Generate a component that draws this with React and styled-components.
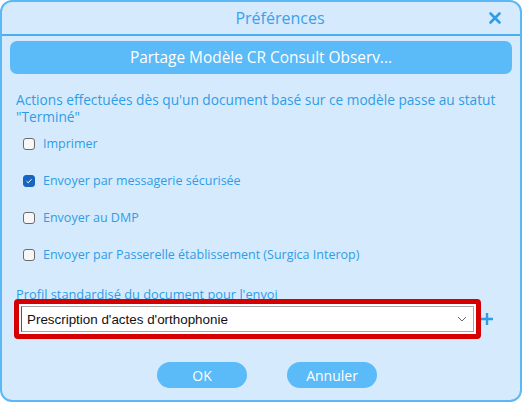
import React, { useState } from "react";
import styled, { createGlobalStyle } from "styled-components";

const GlobalStyle = createGlobalStyle`
    html, body {
        margin: 0;
        padding: 0;
        background: #ffffff;
    }
    body {
        font-family: "Open Sans", "Noto Sans", sans-serif;
    }
`;

const Dialog = styled.div`
    box-sizing: border-box;
    width: 522px;
    height: 402px;
    background-color: #d6eafd;
    border: 2px solid #5cb8f4;
    border-radius: 12px;
    display: flex;
    flex-direction: column;
    overflow: hidden;
`;

const TitleBar = styled.div`
    height: 32px;
    border-bottom: 2px solid #4aaef0;
    display: flex;
    align-items: center;
    justify-content: center;
    padding-left: 38px;
    position: relative;
`;

const Title = styled.div`
    color: #3aa2ea;
    font-size: 16px;
`;

const CloseButton = styled.button`
    position: absolute;
    right: 18px;
    top: 9px;
    border: 0;
    background: none;
    padding: 0;
    width: 14px;
    height: 14px;
    cursor: pointer;
    display: flex;
`;

const Body = styled.div`
    flex: 1;
    display: flex;
    flex-direction: column;
    padding: 5px 8px 0 8px;
`;

const ModelBar = styled.div`
    height: 33px;
    border-radius: 7px;
    background-color: #5bbaf8;
    color: #ffffff;
    font-size: 15.4px;
    display: flex;
    align-items: center;
    justify-content: center;
`;

const Intro = styled.p`
    margin: 17px 0 0 6px;
    color: #2e9de6;
    font-size: 13.7px;
    line-height: 17px;
    white-space: nowrap;
`;

const OptionList = styled.div`
    display: flex;
    flex-direction: column;
    padding-left: 13px;
`;

const Option = styled.label`
    height: 37px;
    display: flex;
    align-items: center;
    gap: 8px;
    color: #2e9de6;
    font-size: 12.5px;
    cursor: pointer;
`;

const Box = styled.span`
    box-sizing: border-box;
    width: 12px;
    height: 12px;
    border-radius: 3px;
    border: 1px solid ${(p) => (p.checked ? "#1665c0" : "#6b6b6b")};
    background-color: ${(p) => (p.checked ? "#1665c0" : "#f7f7f7")};
    display: flex;
    align-items: center;
    justify-content: center;
`;

const FieldLabel = styled.div`
    margin: 15px 0 0 6px;
    color: #2e9de6;
    font-size: 12.8px;
    line-height: 12px;
`;

const FieldRow = styled.div`
    display: flex;
    align-items: center;
    margin: -1px 0 0 4px;
`;

const Highlight = styled.div`
    box-sizing: border-box;
    width: 467px;
    height: 40px;
    border: 5px solid #d70000;
    border-radius: 4px;
    padding: 2px;
    background-color: #ffffff;
`;

const Select = styled.div`
    box-sizing: border-box;
    height: 26px;
    border: 1px solid #a7a7a7;
    border-left-color: #555555;
    background-color: #ffffff;
    display: flex;
    align-items: center;
    justify-content: space-between;
    padding: 0 6px 0 5px;
    color: #111111;
    font-size: 13.4px;
    font-family: "Liberation Sans", Arial, sans-serif;
`;

const Actions = styled.div`
    display: flex;
    justify-content: center;
    gap: 40px;
    margin-top: 23px;
    padding-left: 12px;
`;

const Button = styled.button`
    width: 90px;
    height: 26px;
    border: 0;
    border-radius: 13px;
    background-color: #5bbaf8;
    color: #ffffff;
    font-family: "Open Sans", sans-serif;
    font-size: 14px;
    cursor: pointer;
`;

const CheckMark = () => (
    <svg width="8" height="8" viewBox="0 0 8 8">
        <path d="M1.5 4.2 L3.2 5.8 L6.5 2.2" fill="none" stroke="#ffffff" strokeWidth="1" />
    </svg>
);

const Cross = () => (
    <svg width="14" height="14" viewBox="0 0 14 14">
        <path d="M2.5 2.5 L11.5 11.5 M11.5 2.5 L2.5 11.5" stroke="#2e9de6" strokeWidth="2.6" strokeLinecap="round" />
    </svg>
);

const Chevron = () => (
    <svg width="10" height="6" viewBox="0 0 10 6">
        <path d="M1 1 L5 5 L9 1" fill="none" stroke="#666666" strokeWidth="1" />
    </svg>
);

const Plus = () => (
    <svg width="12" height="12" viewBox="0 0 12 12">
        <path d="M6 0 V12 M0 6 H12" stroke="#2e9de6" strokeWidth="2.4" />
    </svg>
);

const options = [
    { id: "print", label: "Imprimer", checked: false },
    { id: "mss", label: "Envoyer par messagerie sécurisée", checked: true },
    { id: "dmp", label: "Envoyer au DMP", checked: false },
    { id: "surgica", label: "Envoyer par Passerelle établissement (Surgica Interop)", checked: false },
];

export default function App() {
    const [checks, setChecks] = useState(
        Object.fromEntries(options.map((o) => [o.id, o.checked]))
    );

    const toggle = (id) => setChecks((c) => ({ ...c, [id]: !c[id] }));

    return (
        <>
            <GlobalStyle />
            <Dialog>
                <TitleBar>
                    <Title>Préférences</Title>
                    <CloseButton aria-label="Fermer">
                        <Cross />
                    </CloseButton>
                </TitleBar>
                <Body>
                    <ModelBar>Partage Modèle CR Consult Observ...</ModelBar>
                    <Intro>
                        Actions effectuées dès qu'un document basé sur ce modèle passe au statut
                        <br />
                        "Terminé"
                    </Intro>
                    <OptionList>
                        {options.map((o) => (
                            <Option key={o.id} onClick={() => toggle(o.id)}>
                                <Box checked={checks[o.id]}>{checks[o.id] && <CheckMark />}</Box>
                                {o.label}
                            </Option>
                        ))}
                    </OptionList>
                    <FieldLabel>Profil standardisé du document pour l'envoi</FieldLabel>
                    <FieldRow>
                        <Highlight>
                            <Select>
                                Prescription d'actes d'orthophonie
                                <Chevron />
                            </Select>
                        </Highlight>
                        <Plus />
                    </FieldRow>
                    <Actions>
                        <Button>OK</Button>
                        <Button>Annuler</Button>
                    </Actions>
                </Body>
            </Dialog>
        </>
    );
}
